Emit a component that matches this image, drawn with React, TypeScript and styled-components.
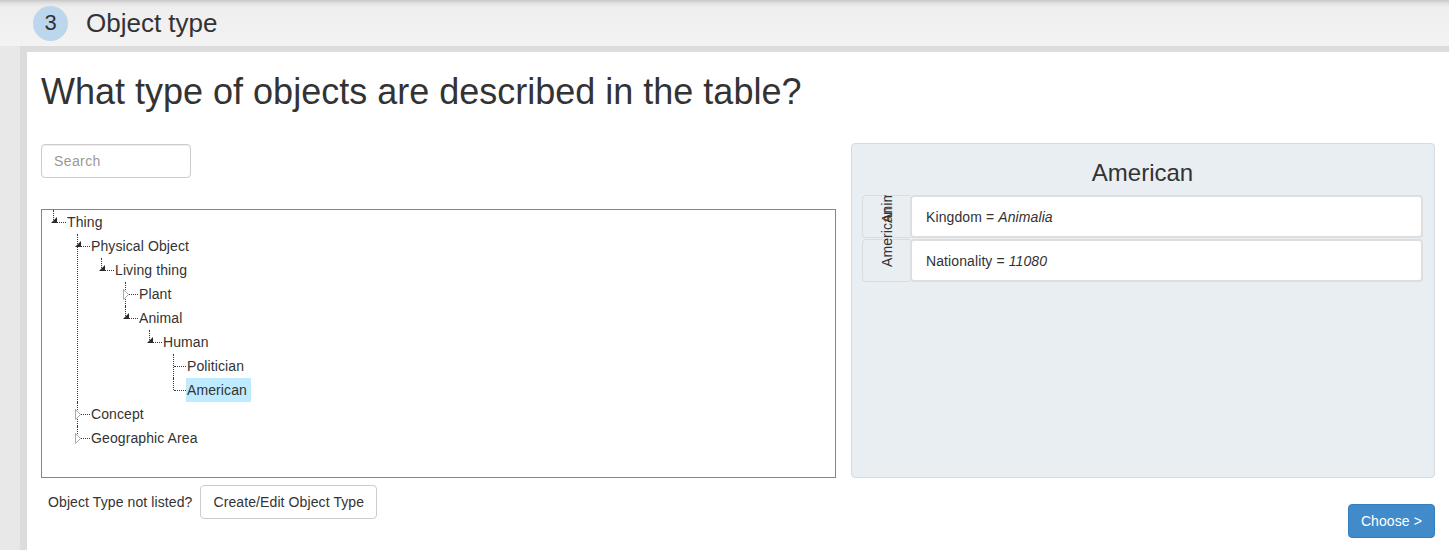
import React from 'react';
import styled, { createGlobalStyle } from 'styled-components';

const GlobalStyle = createGlobalStyle`
  html, body { margin: 0; padding: 0; overflow: hidden; }
  body {
    font-family: "Liberation Sans", Arial, Helvetica, sans-serif;
    font-size: 14px;
    letter-spacing: 0.1px;
    color: #333;
    background: #e8e8e8;
  }
  * { box-sizing: border-box; }
`;

const Page = styled.div`
  height: 550px;
  display: flex;
  flex-direction: column;
`;

const StepHeader = styled.header`
  height: 46px;
  flex: none;
  display: flex;
  align-items: center;
  gap: 18px;
  padding-left: 33px;
  background: linear-gradient(to bottom, #c8c8c8 0px, #e0e0e0 3px, #eeeeee 7px, #f3f3f3 100%);
`;

const StepNumber = styled.span`
  width: 35px;
  height: 35px;
  border-radius: 50%;
  background: #bcd6ee;
  display: flex;
  align-items: center;
  justify-content: center;
  font-size: 22px;
  letter-spacing: 0;
  color: #333;
`;

const StepTitle = styled.h2`
  margin: 0;
  font-size: 26px;
  font-weight: normal;
  letter-spacing: 0;
  color: #333;
`;

const Frame = styled.div`
  flex: 1;
  display: flex;
  padding-left: 20px;
  background: #e8e8e8;
`;

const Sheet = styled.main`
  flex: 1;
  background: #fff;
  border-top: 6px solid #dcdcdc;
  border-left: 7px solid #dcdcdc;
  padding: 0 14px 0 14px;
`;

const Question = styled.h1`
  margin: 20px 0 31px;
  font-size: 36px;
  line-height: 40px;
  font-weight: normal;
  letter-spacing: 0;
  color: #333;
`;

const Columns = styled.div`
  display: flex;
  gap: 15px;
  align-items: flex-start;
`;

const LeftColumn = styled.section`
  width: 795px;
  flex: none;
  display: flex;
  flex-direction: column;
`;

const RightColumn = styled.section`
  flex: 1;
  display: flex;
  flex-direction: column;
`;

const SearchInput = styled.input`
  width: 150px;
  height: 34px;
  margin-top: 1px;
  padding: 6px 12px;
  border: 1px solid #ccc;
  border-radius: 4px;
  box-shadow: inset 0 1px 1px rgba(0, 0, 0, 0.075);
  font-family: inherit;
  font-size: 14px;
  letter-spacing: 0.4px;
  color: #555;
  outline: none;
  &::placeholder { color: #999; }
`;

const TreeBox = styled.div`
  margin-top: 31px;
  height: 269px;
  border: 1px solid #858585;
  background: #fff;
`;

const TreeList = styled.ul<{ $nested?: boolean }>`
  list-style: none;
  margin: 0;
  padding: 0 0 0 ${(p) => (p.$nested ? 24 : 0)}px;
`;

const TreeItem = styled.li<{ $last: boolean }>`
  position: relative;
  &::before {
    content: '';
    position: absolute;
    left: 11px;
    top: 0;
    ${(p) => (p.$last ? 'height: 12px;' : 'bottom: 0;')}
    border-left: 1px dotted #3a3a3a;
  }
`;

const NodeRow = styled.div`
  display: flex;
  height: 24px;
`;

const Joint = styled.span`
  position: relative;
  width: 24px;
  flex: none;
  &::after {
    content: '';
    position: absolute;
    left: 12px;
    right: 0;
    top: 12px;
    border-top: 1px dotted #3a3a3a;
  }
`;

const Toggle = styled.svg`
  position: absolute;
  left: 9px;
  top: 7px;
  z-index: 1;
`;

const NodeLabel = styled.a<{ $selected?: boolean }>`
  display: inline-block;
  height: 24px;
  line-height: 24px;
  padding: 0 4px 0 1px;
  white-space: nowrap;
  color: #333;
  text-decoration: none;
  background: ${(p) => (p.$selected ? '#beebff' : 'transparent')};
`;

const FooterRow = styled.div`
  display: flex;
  align-items: center;
  gap: 8px;
  margin-top: 7px;
  padding-left: 7px;
`;

const Hint = styled.span`
  line-height: 20px;
`;

const Button = styled.button<{ $primary?: boolean }>`
  height: 34px;
  padding: 6px 12px;
  border-radius: 4px;
  border: 1px solid ${(p) => (p.$primary ? '#357ebd' : '#ccc')};
  background: ${(p) => (p.$primary ? '#428bca' : '#fff')};
  color: ${(p) => (p.$primary ? '#fff' : '#333')};
  font-family: inherit;
  font-size: 14px;
  letter-spacing: 0.1px;
  line-height: 20px;
  white-space: nowrap;
  cursor: pointer;
`;

const ChooseButton = styled(Button)`
  align-self: flex-end;
  margin-top: 26px;
`;

const PreviewPanel = styled.div`
  height: 335px;
  padding: 16px 11px 0 10px;
  background: #e9eef2;
  border: 1px solid #d3dce3;
  border-radius: 4px;
`;

const PreviewTitle = styled.h3`
  margin: 0 0 9px;
  font-size: 24px;
  line-height: 26px;
  font-weight: normal;
  letter-spacing: 0;
  text-align: center;
  color: #333;
`;

const PropertyList = styled.div`
  overflow: hidden;
  display: flex;
  flex-direction: column;
  gap: 1px;
`;

const PropertyRow = styled.div`
  display: flex;
  height: 43px;
`;

const SourceCell = styled.div`
  position: relative;
  width: 48px;
  flex: none;
  border: 1px solid #d8dcdf;
  border-right: none;
  border-radius: 4px 0 0 4px;
  background: #e9eef2;
`;

const SourceLabel = styled.span`
  position: absolute;
  left: 17px;
  top: 27px;
  transform-origin: 0 0;
  transform: rotate(-90deg);
  white-space: nowrap;
  font-size: 14px;
  line-height: 14px;
  color: #333;
`;

const ValueCell = styled.div`
  flex: 1;
  display: flex;
  align-items: center;
  padding: 0 14px;
  background: #fff;
  border: 2px solid #dedede;
  border-radius: 4px;
`;

const Value = styled.em`
  font-style: italic;
`;

type TNode = {
  label: string;
  state: 'open' | 'closed' | 'leaf';
  selected?: boolean;
  children?: TNode[];
};

const tree: TNode[] = [
  {
    label: 'Thing',
    state: 'open',
    children: [
      {
        label: 'Physical Object',
        state: 'open',
        children: [
          {
            label: 'Living thing',
            state: 'open',
            children: [
              { label: 'Plant', state: 'closed' },
              {
                label: 'Animal',
                state: 'open',
                children: [
                  {
                    label: 'Human',
                    state: 'open',
                    children: [
                      { label: 'Politician', state: 'leaf' },
                      { label: 'American', state: 'leaf', selected: true },
                    ],
                  },
                ],
              },
            ],
          },
        ],
      },
      { label: 'Concept', state: 'closed' },
      { label: 'Geographic Area', state: 'closed' },
    ],
  },
];

function ToggleIcon({ state }: { state: TNode['state'] }) {
  if (state === 'open') {
    return (
      <Toggle width="6" height="6" viewBox="0 0 6 6">
        <polygon points="0,6 6,6 6,0" fill="#2a2a2a" />
      </Toggle>
    );
  }
  if (state === 'closed') {
    return (
      <Toggle width="6" height="11" viewBox="0 0 6 11">
        <polygon points="0.5,0.5 5.5,5.5 0.5,10.5" fill="#fff" stroke="#aaa" strokeWidth="1" />
      </Toggle>
    );
  }
  return null;
}

function TreeNodes({ nodes, nested }: { nodes: TNode[]; nested?: boolean }) {
  return (
    <TreeList $nested={nested}>
      {nodes.map((n, i) => (
        <TreeItem key={n.label} $last={i === nodes.length - 1}>
          <NodeRow>
            <Joint>
              <ToggleIcon state={n.state} />
            </Joint>
            <NodeLabel $selected={n.selected}>{n.label}</NodeLabel>
          </NodeRow>
          {n.children && <TreeNodes nodes={n.children} nested />}
        </TreeItem>
      ))}
    </TreeList>
  );
}

const properties = [
  { source: 'Animal', name: 'Kingdom', value: 'Animalia' },
  { source: 'American', name: 'Nationality', value: '11080' },
];

export default function App() {
  return (
    <Page>
      <GlobalStyle />
      <StepHeader>
        <StepNumber>3</StepNumber>
        <StepTitle>Object type</StepTitle>
      </StepHeader>
      <Frame>
        <Sheet>
          <Question>What type of objects are described in the table?</Question>
          <Columns>
            <LeftColumn>
              <SearchInput placeholder="Search" />
              <TreeBox>
                <TreeNodes nodes={tree} />
              </TreeBox>
              <FooterRow>
                <Hint>Object Type not listed?</Hint>
                <Button>Create/Edit Object Type</Button>
              </FooterRow>
            </LeftColumn>
            <RightColumn>
              <PreviewPanel>
                <PreviewTitle>American</PreviewTitle>
                <PropertyList>
                  {properties.map((p) => (
                    <PropertyRow key={p.name}>
                      <SourceCell>
                        <SourceLabel>{p.source}</SourceLabel>
                      </SourceCell>
                      <ValueCell>
                        {p.name} =&nbsp;<Value>{p.value}</Value>
                      </ValueCell>
                    </PropertyRow>
                  ))}
                </PropertyList>
              </PreviewPanel>
              <ChooseButton $primary>Choose &gt;</ChooseButton>
            </RightColumn>
          </Columns>
        </Sheet>
      </Frame>
    </Page>
  );
}
